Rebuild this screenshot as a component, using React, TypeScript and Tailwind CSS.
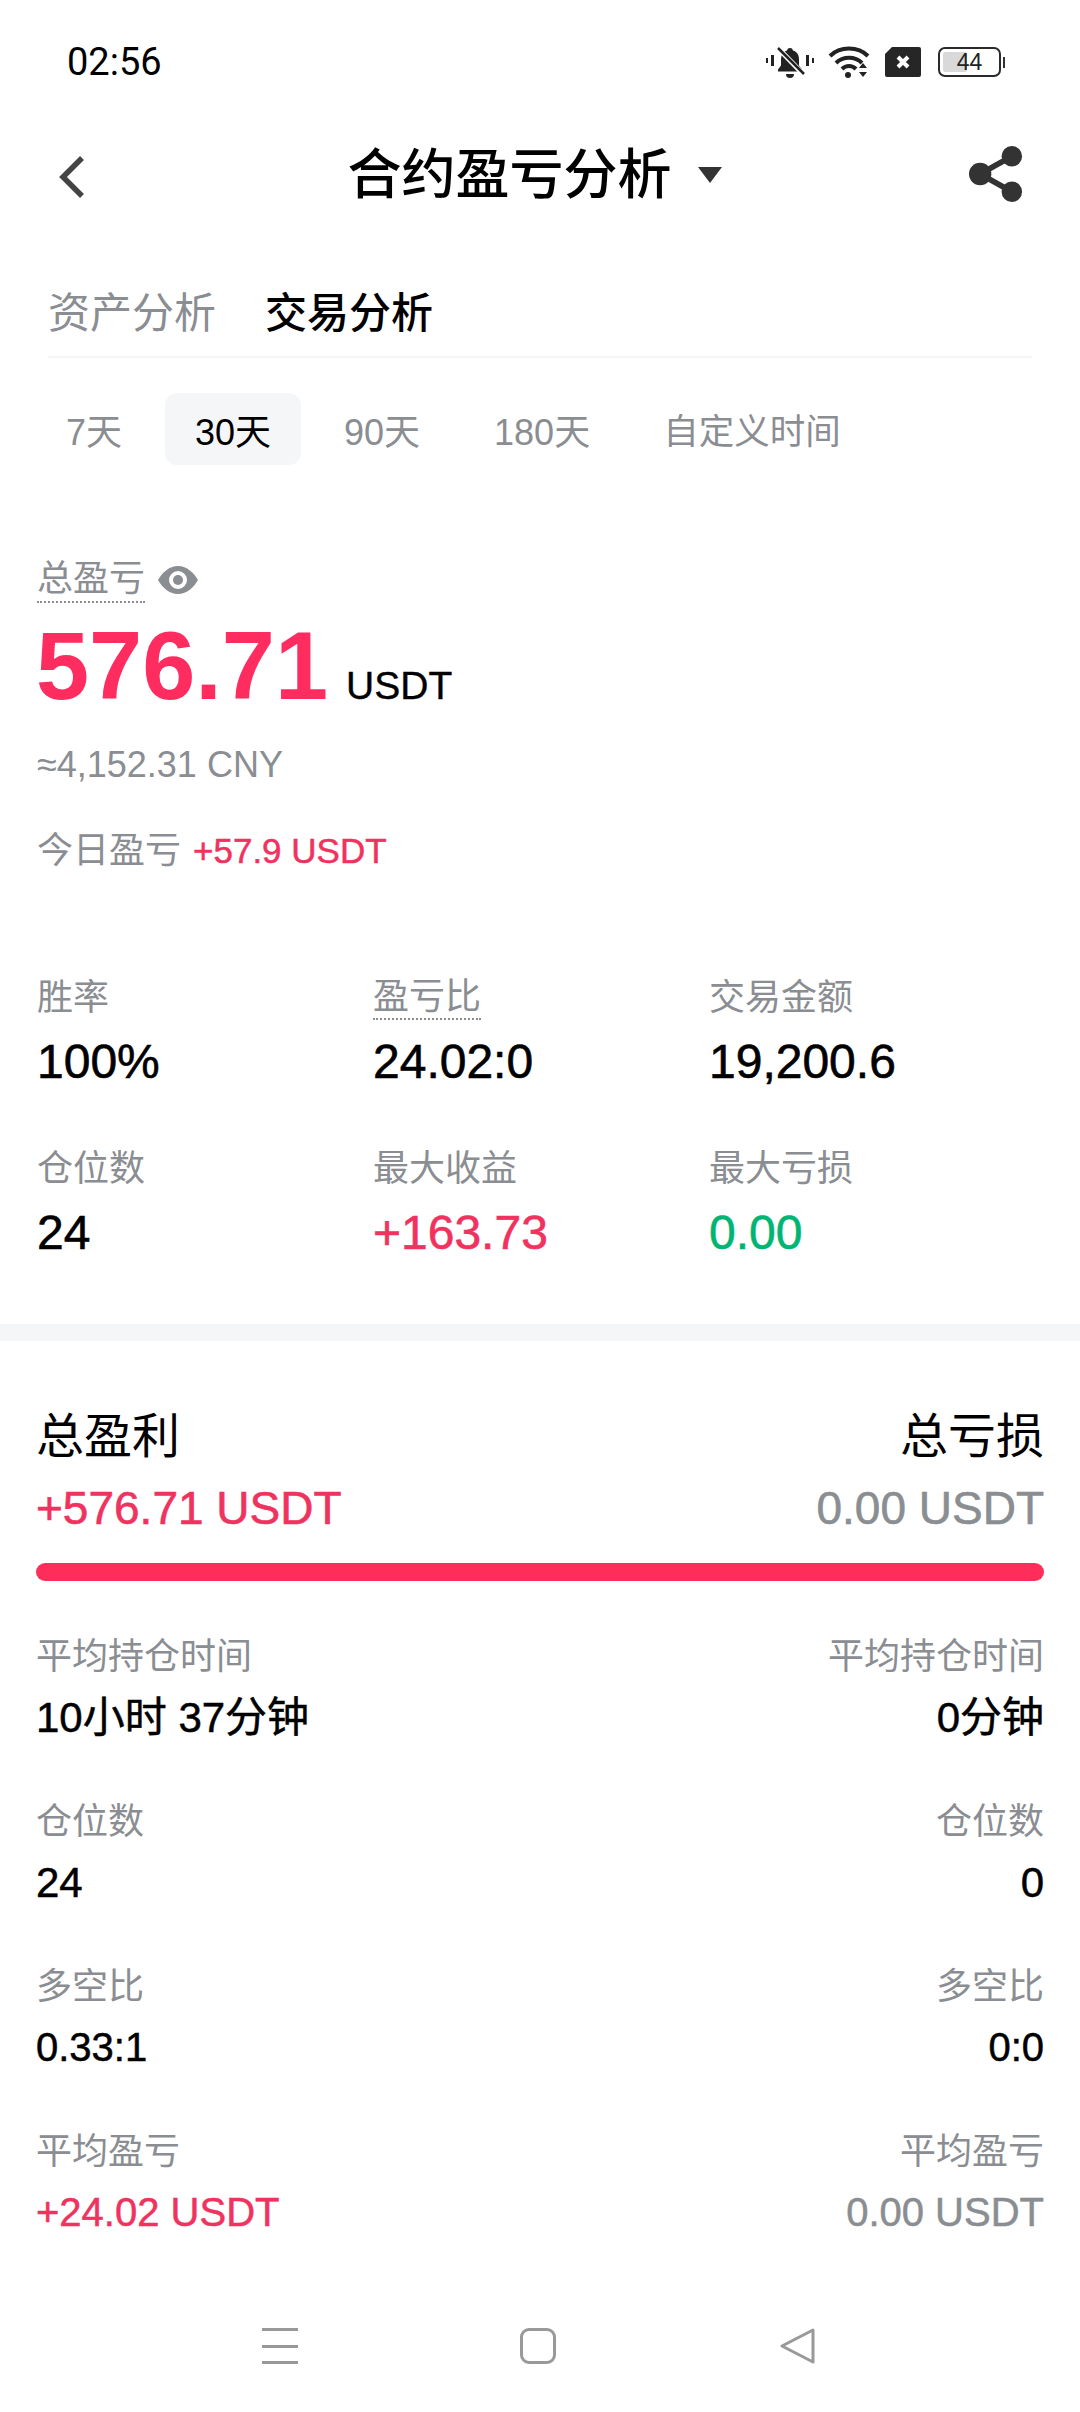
const F = { fontFamily: '"Liberation Sans", "Noto Sans CJK SC", sans-serif' };

function StatusIcons() {
  return (
    <div className="flex items-center">
      <svg width="50" height="34" viewBox="0 0 50 34" fill="#222">
        <rect x="1" y="13" width="2" height="5" />
        <rect x="6" y="10" width="3" height="11" />
        <rect x="41" y="10" width="3" height="11" />
        <rect x="47" y="13" width="2" height="5" />
        <path d="M25 3a3 3 0 0 1 3 2.400c4 1 6 4.600 6 9v6l3 4v2H13v-2l3-4v-6c0-4.400 2-8 6-9A3 3 0 0 1 25 3z" />
        <path d="M21 29h8a4 4 0 0 1-8 0z" />
        <path d="M12 2 L39 30" stroke="#fff" strokeWidth="5" />
        <path d="M13 3 L39 29" stroke="#222" strokeWidth="2.500" />
      </svg>
      <svg width="44" height="36" viewBox="0 0 44 36" className="ml-[13px]" fill="none" stroke="#222" strokeWidth="4">
        <path d="M2 12C12 2 30 2 40 12" />
        <path d="M8 19c7-7 19-7 26 0" />
        <path d="M14 25c4-4 10-4 14 0" />
        <circle cx="20" cy="31" r="3" fill="#222" stroke="none" />
        <path d="M31 24h8l-4-5z M31 28h8l-4 5z" fill="#222" stroke="none" />
      </svg>
      <svg width="36" height="30" viewBox="0 0 36 30" className="ml-[13px]">
        <path d="M7 0h27a2 2 0 0 1 2 2v26a2 2 0 0 1-2 2H2a2 2 0 0 1-2-2V7z" fill="#262626" />
        <path d="M13 10l10 10M23 10L13 20" stroke="#fff" strokeWidth="4" />
      </svg>
      <div className="ml-[17px] flex items-center">
        <div className="relative flex h-[30px] w-[63px] items-center justify-center overflow-hidden rounded-[7px] border-2 border-[#2a2a2a] text-[23px] leading-none text-[#222]">
          <div className="absolute bottom-[3px] left-[3px] top-[3px] w-[24px] rounded-[2px] bg-[#d9d9d9]" />
          <span className="relative" style={{ fontFamily: '"Liberation Sans", sans-serif' }}>44</span>
        </div>
        <div className="ml-[2px] h-[11px] w-[2px] bg-[#333]" />
      </div>
    </div>
  );
}

function Stat({ label, value, color, dotted }: { label: string; value: string; color?: string; dotted?: boolean }) {
  return (
    <div className="h-[171px]">
      <div className="flex h-[44px] items-center">
        <span className={`text-[36px] leading-[42px] text-[#8a8d91] ${dotted ? 'border-b-2 border-dotted border-[#8a8d91]' : ''}`}>{label}</span>
      </div>
      <div className={`mt-[17px] text-[48px] leading-[50px] [-webkit-text-stroke:0.6px] ${color ?? 'text-black'}`}>{value}</div>
    </div>
  );
}

function Row({ label, left, right, leftColor, rightColor, size }: { label: string; left: string; right: string; leftColor?: string; rightColor?: string; size?: string }) {
  return (
    <div className="h-[165px]">
      <div className="flex h-[44px] items-center justify-between text-[36px] text-[#8a8d91]">
        <span>{label}</span>
        <span>{label}</span>
      </div>
      <div className={`mt-[16px] flex h-[44px] items-center justify-between [-webkit-text-stroke:0.5px] ${size ?? 'text-[40px]'}`}>
        <span className={leftColor ?? 'text-black'}>{left}</span>
        <span className={rightColor ?? 'text-black'}>{right}</span>
      </div>
    </div>
  );
}

export default function App() {
  return (
    <div className="relative h-[2412px] w-[1080px] overflow-hidden bg-white" style={F}>
      <div className="flex h-[124px] items-center justify-between pl-[67px] pr-[75px]">
        <span className="text-[38px] leading-none text-black" style={{ fontFamily: 'Roboto, sans-serif' }}>02:56</span>
        <StatusIcons />
      </div>

      <div className="relative flex h-[102px] items-center justify-center">
        <svg width="30" height="44" viewBox="0 0 30 44" className="absolute left-[57px] top-[31px]" fill="none" stroke="#444" strokeWidth="5.500">
          <path d="M25 3L6 22l19 19" />
        </svg>
        <div className="flex items-center pr-[11px]">
          <span className="text-[54px] font-medium leading-none text-black">合约盈亏分析</span>
          <svg width="24" height="16" viewBox="0 0 24 16" className="ml-[26px]"><path d="M0 0h24L12 16z" fill="#333" /></svg>
        </div>
        <svg width="54" height="58" viewBox="0 0 58 60" className="absolute right-[57px] top-[21px]" fill="#333">
          <circle cx="46" cy="11" r="11" />
          <circle cx="46" cy="49" r="11" />
          <circle cx="12" cy="30" r="12" />
          <path d="M12 30L46 11M12 30l34 19" stroke="#333" strokeWidth="6" />
        </svg>
      </div>

      <div className="mx-[48px] mt-[32px] flex h-[100px] items-start border-b-2 border-[#f5f6f7] pt-[28px] text-[42px] leading-[56px]">
        <span className="text-[#8a8d91]">资产分析</span>
        <span className="ml-[49px] font-medium text-black">交易分析</span>
      </div>

      <div className="ml-[48px] mt-[35px] flex h-[72px] items-center text-[36px] text-[#8a8d91]">
        <span className="pl-[18px] pt-[8px]">7天</span>
        <span className="ml-[43px] flex h-[72px] w-[136px] items-center justify-center rounded-[12px] bg-[#f5f6f7] pt-[8px] text-black">30天</span>
        <span className="ml-[43px] pt-[8px]">90天</span>
        <span className="ml-[74px] pt-[8px]">180天</span>
        <span className="ml-[73px] pt-[8px] text-[35.500px]">自定义时间</span>
      </div>

      <div className="ml-[37px] mt-[91px] flex h-[48px] items-center">
        <span className="border-b-2 border-dotted border-[#8a8d91] text-[36px] leading-[44px] text-[#8a8d91]">总盈亏</span>
        <svg width="42" height="30" viewBox="0 0 42 30" className="ml-[12px]">
          <path fillRule="evenodd" d="M21 1c9 0 16 7 20 14-4 7-11 14-20 14S5 22 1 15C5 8 12 1 21 1zm0 5a9 9 0 1 0 0 18 9 9 0 0 0 0-18z" fill="#8a8d91" />
          <circle cx="21" cy="15" r="5" fill="#8a8d91" />
        </svg>
      </div>

      <div className="ml-[36px] mt-[14px] flex h-[96px] items-baseline">
        <span className="text-[95.500px] font-bold leading-[96px] text-[#ff2d5f]">576.71</span>
        <span className="ml-[18px] text-[39px] [-webkit-text-stroke:0.4px] text-black">USDT</span>
      </div>

      <div className="ml-[37px] mt-[29px] text-[36px] leading-[44px] text-[#8a8d91]">≈4,152.31 CNY</div>

      <div className="ml-[37px] mt-[42px] flex h-[44px] items-center">
        <span className="text-[36px] text-[#8a8d91]">今日盈亏</span>
        <span className="ml-[12px] text-[35px] [-webkit-text-stroke:0.5px] text-[#f0325f]">+57.9 USDT</span>
      </div>

      <div className="ml-[37px] mt-[103px] grid h-[342px] grid-cols-[336px_336px_1fr]">
        <Stat label="胜率" value="100%" />
        <Stat label="盈亏比" value="24.02:0" dotted />
        <Stat label="交易金额" value="19,200.6" />
        <Stat label="仓位数" value="24" />
        <Stat label="最大收益" value="+163.73" color="text-[#f0325f]" />
        <Stat label="最大亏损" value="0.00" color="text-[#00b574]" />
      </div>

      <div className="mt-[6px] h-[17px] bg-[#f5f6f7]" />

      <div className="mx-[36px] mt-[68px]">
        <div className="flex h-[56px] items-center justify-between text-[48px] text-black">
          <span>总盈利</span>
          <span>总亏损</span>
        </div>
        <div className="mt-[17px] flex h-[52px] items-center justify-between text-[46px] [-webkit-text-stroke:0.6px]">
          <span className="text-[#f0325f]">+576.71 USDT</span>
          <span className="text-[#8a8d91]">0.00 USDT</span>
        </div>
        <div className="mt-[29px] h-[18px] rounded-full bg-[#ff2d5a]" />
        <div className="mt-[54px]">
          <Row label="平均持仓时间" left="10小时 37分钟" right="0分钟" size="text-[42px]" />
          <Row label="仓位数" left="24" right="0" size="text-[42px]" />
          <Row label="多空比" left="0.33:1" right="0:0" />
          <Row label="平均盈亏" left="+24.02 USDT" right="0.00 USDT" leftColor="text-[#f0325f]" rightColor="text-[#8a8d91]" />
        </div>
      </div>

      <div className="absolute bottom-[48px] left-0 flex h-[36px] w-full items-center pl-[262px]">
        <div className="flex h-[36px] w-[36px] flex-col justify-between">
          <div className="h-[3px] bg-[#999]" />
          <div className="h-[3px] bg-[#999]" />
          <div className="h-[3px] bg-[#999]" />
        </div>
        <div className="ml-[222px] h-[36px] w-[36px] rounded-[9px] border-[3px] border-[#999]" />
        <svg width="36" height="36" viewBox="0 0 36 36" className="ml-[224px]" fill="none" stroke="#999" strokeWidth="3" strokeLinejoin="round">
          <path d="M33 2L2 18l31 16z" />
        </svg>
      </div>
    </div>
  );
}
